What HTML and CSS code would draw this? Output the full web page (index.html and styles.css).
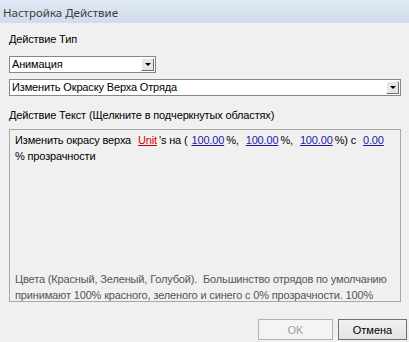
FILE: index.html
```html
<!DOCTYPE html>
<html lang="ru">
<head>
    <meta charset="UTF-8">
    <title>Настройка Действие</title>
    <link rel="stylesheet" href="styles.css">
</head>
<body>
    <div class="dialog">
        <div class="title-bar">Настройка Действие</div>
        <div class="content">
            <div class="label">Действие Тип</div>
            <div class="combo combo-short">
                <span class="combo-value">Анимация</span>
                <span class="combo-btn"><span class="arrow"></span></span>
            </div>
            <div class="combo combo-wide">
                <span class="combo-value">Изменить Окраску Верха Отряда</span>
                <span class="combo-btn"><span class="arrow"></span></span>
            </div>
            <div class="label label-text">Действие Текст (Щелкните в подчеркнутых областях)</div>
            <div class="text-box">
                <div class="action-text">
                    Изменить окрасу верха <a class="link red">Unit</a>'s на (<a class="link">100.00</a>%, <a class="link">100.00</a>%, <a class="link">100.00</a>%) с <a class="link">0.00</a><br>% прозрачности
                </div>
                <div class="hint">Цвета (Красный, Зеленый, Голубой).&nbsp; Большинство отрядов по умолчанию принимают 100% красного, зеленого и синего с 0% прозрачности. 100%</div>
            </div>
            <div class="buttons">
                <button class="button" disabled>OK</button>
                <button class="button">Отмена</button>
            </div>
        </div>
    </div>
</body>
</html>
```

FILE: styles.css
```css
body {
    margin: 0;
    padding: 0;
    background-color: #f0f0f0;
    font-family: 'Liberation Sans', Arial, sans-serif;
    font-size: 11px;
    letter-spacing: -0.15px;
    color: #000;
}

.dialog {
    width: 409px;
    height: 342px;
    background-color: #f0f0f0;
    overflow: hidden;
}

.title-bar {
    height: 23px;
    line-height: 25px;
    padding-left: 3px;
    background: linear-gradient(to bottom, #dfe8f3, #cfdcec);
    color: #3c3c3c;
    font-family: 'Noto Sans', sans-serif;
    font-size: 11.5px;
    letter-spacing: 0;
}

.content {
    padding: 10px 8px 0 9px;
}

.label {
    height: 13px;
    line-height: 13px;
    margin-bottom: 10px;
}

.combo {
    display: flex;
    height: 17px;
    border: 1px solid #828790;
    background: #fff;
    box-sizing: border-box;
    margin-bottom: 6px;
}

.combo-short {
    width: 147px;
}

.combo-wide {
    width: 392px;
}

.combo-value {
    flex: 1;
    line-height: 15px;
    padding-left: 2px;
}

.combo-btn {
    width: 13px;
    margin: 1px;
    background: #e6e6e6;
    border: 1px solid;
    border-color: #fff #6d6d6d #6d6d6d #fff;
    box-sizing: border-box;
    display: flex;
    justify-content: center;
    align-items: center;
}

.arrow {
    width: 0;
    height: 0;
    border-left: 3px solid transparent;
    border-right: 3px solid transparent;
    border-top: 3px solid #000;
}

.label-text {
    margin-top: 13px;
    margin-bottom: 7px;
}

.text-box {
    width: 392px;
    height: 173px;
    box-sizing: border-box;
    border: 1px solid #a7a7a7;
    padding: 2px 4px 0 5px;
    display: flex;
    flex-direction: column;
    justify-content: space-between;
    line-height: 16px;
    overflow: hidden;
}

.link {
    color: #1a1aa6;
    text-decoration: underline;
    margin: 0 2px 0 4px;
}

.link.red {
    color: #d40000;
}

.hint {
    color: #555;
    margin-bottom: -2px;
}

.buttons {
    display: flex;
    justify-content: flex-end;
    gap: 5px;
    margin-top: 17px;
    margin-right: -6px;
}

.button {
    height: 21px;
    border: 1px solid #707070;
    background: linear-gradient(to bottom, #f2f2f2, #e3e3e3);
    font-family: 'Liberation Sans', Arial, sans-serif;
    font-size: 11px;
    color: #000;
    padding: 0;
    width: 69px;
}

.button:disabled {
    width: 75px;
    border-color: #adb2b5;
    background: #f4f4f4;
    color: #a0a0a0;
}
```
